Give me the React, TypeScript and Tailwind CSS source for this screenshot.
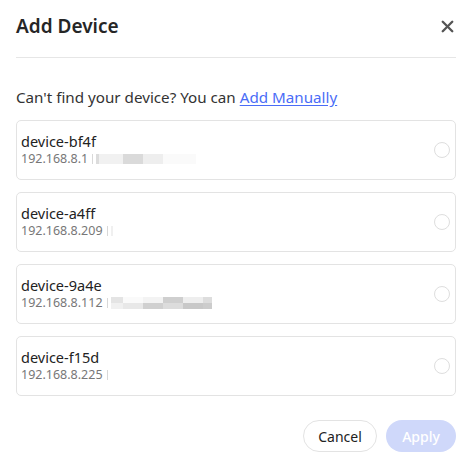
import { X } from "lucide-react";

type Device = {
  name: string;
  ip: string;
  // redacted blocks: [width, colour] per row
  blocks: { w: number; c: string }[][];
};

const devices: Device[] = [
  {
    name: "device-bf4f",
    ip: "192.168.8.1",
    blocks: [
      [
        { w: 3, c: "#dcdcdc" },
        { w: 24, c: "#f1f1f1" },
        { w: 20, c: "#dadada" },
        { w: 20, c: "#eeeeee" },
        { w: 33, c: "#fafafa" },
      ],
    ],
  },
  {
    name: "device-a4ff",
    ip: "192.168.8.209",
    blocks: [[{ w: 2, c: "#f0f0f0" }]],
  },
  {
    name: "device-9a4e",
    ip: "192.168.8.112",
    blocks: [
      [
        { w: 12, c: "#e4e4e4" },
        { w: 20, c: "#fafafa" },
        { w: 20, c: "#f3f3f3" },
        { w: 20, c: "#cfcfcf" },
        { w: 20, c: "#eeeeee" },
        { w: 9, c: "#dddddd" },
      ],
      [
        { w: 12, c: "#f0f0f0" },
        { w: 20, c: "#e8e8e8" },
        { w: 20, c: "#d0d0d0" },
        { w: 20, c: "#dcdcdc" },
        { w: 20, c: "#c8c8c8" },
        { w: 9, c: "#cccccc" },
      ],
    ],
  },
  {
    name: "device-f15d",
    ip: "192.168.8.225",
    blocks: [],
  },
];

function DeviceCard({ device }: { device: Device }) {
  return (
    <label className="flex items-center h-[60px] rounded-[5px] border border-[#e3e3e3] pl-[4px] pr-[5px] cursor-pointer">
      <div className="flex-1 min-w-0">
        <p className="text-[14.5px] leading-[20px] text-[#222] mt-[-1px]">{device.name}</p>
        <div className="flex items-center mt-[-1px]">
          <span className="text-[12.5px] leading-[18px] text-[#777]">{device.ip}</span>
          <span className="ml-[4px] w-px h-[10px] bg-[#d8d8d8]" />
          {device.blocks.length > 0 && (
            <div className="ml-[3px] flex flex-col">
              {device.blocks.map((row, i) => (
                <div key={i} className="flex" style={{ height: device.blocks.length > 1 ? 6 : 10 }}>
                  {row.map((b, j) => (
                    <span key={j} style={{ width: b.w, backgroundColor: b.c }} />
                  ))}
                </div>
              ))}
            </div>
          )}
        </div>
      </div>
      <span className="w-[16px] h-[16px] rounded-full border border-[#dedede] bg-white shrink-0" />
    </label>
  );
}

export default function App() {
  return (
    <div className="w-[474px] h-[469px] bg-white font-['Noto_Sans','Open_Sans',sans-serif] pl-4 pr-[18px]">
      <div className="flex items-center justify-between h-[58px] border-b border-[#e6e6e6]">
        <h1 className="text-[19px] font-semibold text-[#262626] mt-[-4px]">Add Device</h1>
        <button className="text-[#555] mr-[-1px] mt-[-4px]">
          <X size={19} strokeWidth={3} />
        </button>
      </div>
      <p className="mt-[28px] text-[15.2px] leading-[22px] text-[#333]">
        Can't find your device? You can{" "}
        <a className="text-[#4a6cf7] underline underline-offset-2" href="#">
          Add Manually
        </a>
      </p>
      <div className="mt-[12px] flex flex-col gap-[12px]">
        {devices.map((d) => (
          <DeviceCard key={d.name} device={d} />
        ))}
      </div>
      <div className="mt-[24px] flex justify-end gap-[9px]">
        <button className="h-[32px] w-[74px] rounded-full border border-[#e3e3e3] text-[14px] text-[#222]">
          Cancel
        </button>
        <button className="h-[32px] w-[70px] rounded-full bg-[#cfd8fa] text-[14px] font-medium text-white">
          Apply
        </button>
      </div>
    </div>
  );
}
